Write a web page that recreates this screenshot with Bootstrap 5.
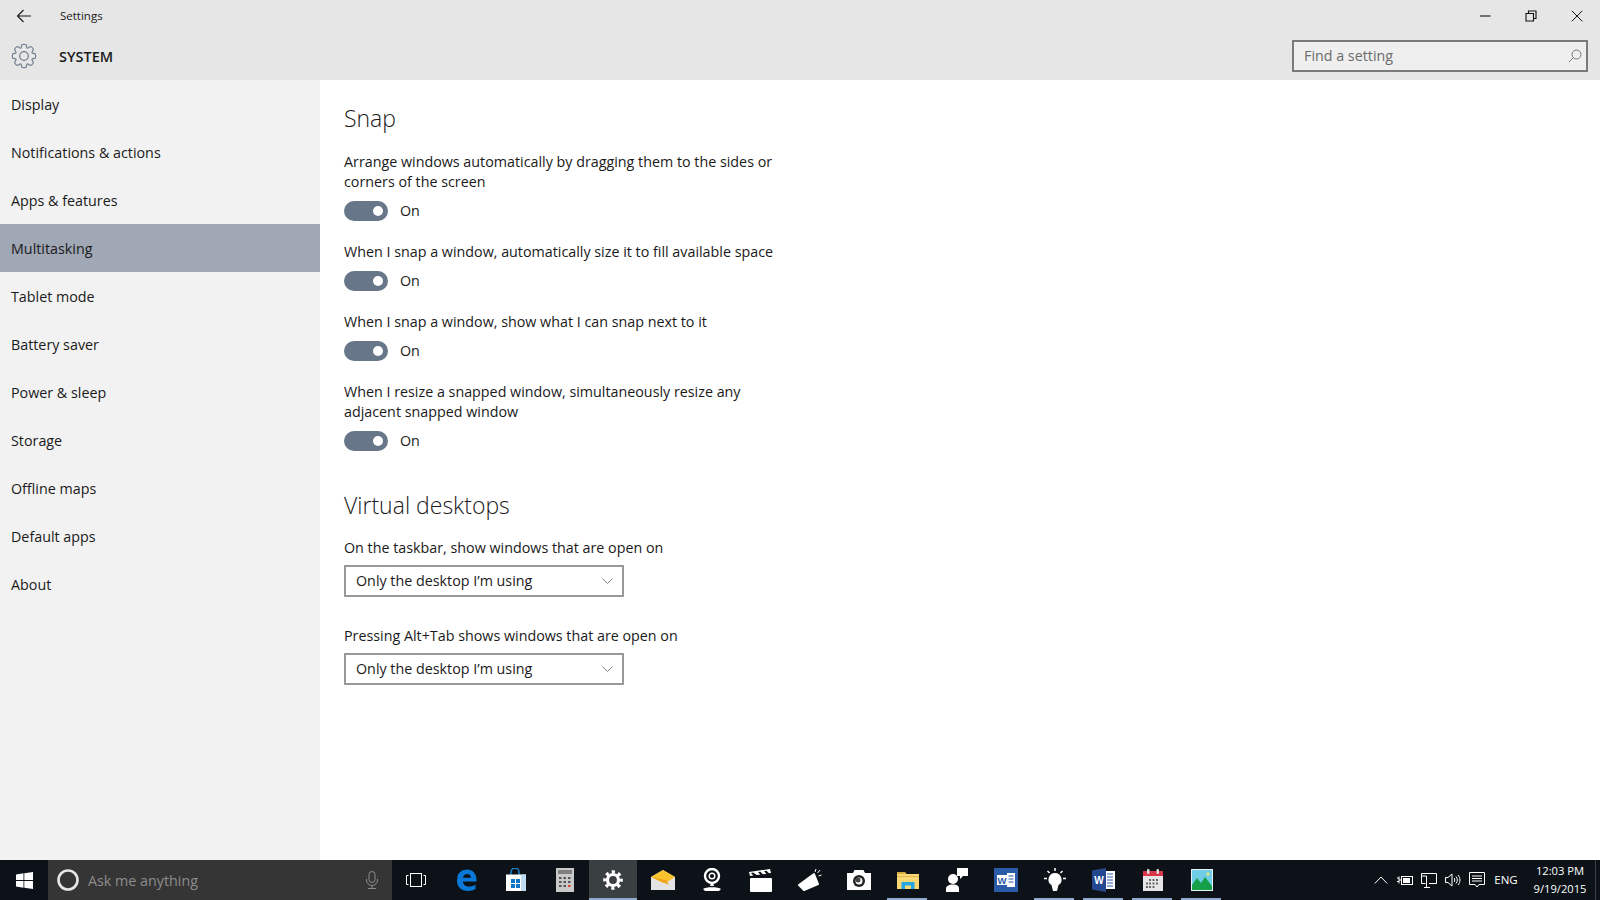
<!DOCTYPE html>
<html lang="en">
<head>
  <meta charset="UTF-8" />
  <title>Settings</title>
  <link href="https://cdn.jsdelivr.net/npm/bootstrap@5.3.0/dist/css/bootstrap.min.css" rel="stylesheet"/>
  <style>
    html, body { height: 100%; }
    body {
      font-family: "Open Sans", "Noto Sans", sans-serif;
      font-size: 14.3px;
      color: #1a1a1a;
      background: #fff;
      overflow: hidden;
    }
    .app-shell { height: 900px; }
    .win-head { height: 80px; background: #e6e6e6; flex: none; }
    .title-row { height: 32px; }
    .back-btn { width: 48px; }
    .title-text { font-size: 11.5px; margin-left: 12px; }
    .win-ctl { width: 46px; height: 32px; }
    .system-row { height: 48px; }
    .system-icon { width: 48px; }
    .system-text { font-size: 14.5px; font-weight: 600; margin-left: 11px; padding-top: 1px; }
    .search-box {
      width: 296px; height: 32px; margin-right: 12px; margin-top: -1px;
      border: 2px solid #7a7a7a; background: #efefef;
    }
    .search-input {
      border: 0; border-radius: 0; background: transparent; padding: 0 0 0 10px;
      font-size: 14.3px; color: #666; box-shadow: none;
    }
    .search-input::placeholder { color: #6b6b6b; opacity: 1; }
    .win-body { flex: 1 1 auto; min-height: 0; }
    .side-pane { --bs-list-group-border-width: 0px; width: 320px; background: #f2f2f2; flex: none; }
    .side-item {
      height: 48px; padding: 2px 0 0 11px; border-radius: 0;
      background: transparent; color: #1a1a1a; font-size: 14.3px;
      display: flex; align-items: center;
    }
    .side-item.active { background: #a0a7b5; color: #1a1a1a; }
    .main-pane { padding: 0 0 0 24px; }
    .sec-title { font-size: 23px; font-weight: 300; line-height: 32px; margin: 22px 0 18px; color: #1a1a1a; }
    .sec-title.second { margin-top: 38px; margin-bottom: 17px; }
    .opt-text { width: 440px; line-height: 20px; margin: 0; }
    .opt-row { height: 20px; margin: 9px 0 21px; }
    .tgl-on {
      width: 44px; height: 20px; border-radius: 10px; background: #68768a;
      margin-right: 12px; padding-right: 5px;
    }
    .tgl-knob { width: 10px; height: 10px; border-radius: 50%; background: #fff; }
    .drop-box {
      width: 280px; height: 32px; border: 2px solid #999; border-radius: 0;
      padding: 0 9px 0 10px; margin: 7px 0 29px; background: #fff;
    }
    .task-bar { height: 40px; background: #0c1217; color: #fff; flex: none; }
    .start-btn { width: 48px; }
    .ask-box { width: 344px; background: #353535; padding: 0 13px 0 9px; }
    .ask-text { color: #8c8c8c; font-size: 14.3px; margin-left: 9px; padding-top: 2px; }
    .view-btn { width: 50px; padding-right: 2px; }
    .app-slot { width: 49px; height: 40px; position: relative; }
    .app-slot.open::after {
      content: ""; position: absolute; left: 4px; right: 5px; bottom: 0; height: 2px; background: #8fa9cf;
    }
    .app-slot.current { background: #3a3f42; width: 48px; margin-right: 1px; }
    .app-slot.current::after {
      content: ""; position: absolute; left: 0; right: 0; bottom: 0; height: 2px; background: #8fa9cf;
    }
    .tray-slot { width: 24px; height: 40px; }
    .tray-lang { font-size: 11.5px; width: 34px; text-align: center; margin-right: 5px; }
    .tray-clock { font-size: 11.2px; line-height: 18px; width: 64px; text-align: center; margin-right: 3px; }
    .desk-edge { width: 5px; height: 40px; border-left: 1px solid #3a4046; }
  </style>
</head>
<body>
<div class="app-shell d-flex flex-column">

  <header class="win-head d-flex flex-column">
    <div class="title-row d-flex align-items-center">
      <div class="back-btn d-flex justify-content-center">
        <svg width="16" height="16" viewBox="0 0 16 16" fill="none" stroke="#1a1a1a" stroke-width="1.1"><path d="M1.5 8H15M7.5 2 1.5 8l6 6"/></svg>
      </div>
      <span class="title-text">Settings</span>
      <div class="ms-auto d-flex">
        <div class="win-ctl d-flex align-items-center justify-content-center">
          <svg width="12" height="12" viewBox="0 0 12 12" stroke="#111" stroke-width="1.1"><path d="M1 6h10.5"/></svg>
        </div>
        <div class="win-ctl d-flex align-items-center justify-content-center">
          <svg width="12" height="12" viewBox="0 0 12 12" fill="none" stroke="#111" stroke-width="1.1"><path d="M1 3.5h7.5V11H1zM3.5 3.5V1H11v7.5H8.500"/></svg>
        </div>
        <div class="win-ctl d-flex align-items-center justify-content-center">
          <svg width="12" height="12" viewBox="0 0 12 12" stroke="#111" stroke-width="1"><path d="M.8.8l10.500 10.500M11.300.8.8 11.300"/></svg>
        </div>
      </div>
    </div>
    <div class="system-row d-flex align-items-center">
      <div class="system-icon d-flex justify-content-center">
        <svg width="26" height="26" viewBox="-13 -13 26 26" fill="none" stroke="#6f7f90" stroke-width="1.200">
          <defs><path id="gearTooth" d="M-3.250-7.850C-2.200-8.600-2.900-10-2.200-11.200-1-11.800 1-11.800 2.200-11.200 2.900-10 2.200-8.600 3.250-7.850"/></defs>
          <use href="#gearTooth"/><use href="#gearTooth" transform="rotate(45)"/><use href="#gearTooth" transform="rotate(90)"/><use href="#gearTooth" transform="rotate(135)"/>
          <use href="#gearTooth" transform="rotate(180)"/><use href="#gearTooth" transform="rotate(225)"/><use href="#gearTooth" transform="rotate(270)"/><use href="#gearTooth" transform="rotate(315)"/>
          <circle r="4.300"/>
        </svg>
      </div>
      <span class="system-text">SYSTEM</span>
      <div class="search-box ms-auto d-flex align-items-center">
        <input class="form-control search-input" type="text" placeholder="Find a setting">
        <svg class="flex-shrink-0 me-1" width="14" height="14" viewBox="0 0 14 14" fill="none" stroke="#777" stroke-width="1"><circle cx="8.500" cy="5.500" r="4.500"/><path d="M5.200 8.800.8 13.200"/></svg>
      </div>
    </div>
  </header>

  <div class="win-body d-flex">
    <nav class="side-pane list-group list-group-flush">
      <a class="list-group-item side-item" href="#">Display</a>
      <a class="list-group-item side-item" href="#">Notifications &amp; actions</a>
      <a class="list-group-item side-item" href="#">Apps &amp; features</a>
      <a class="list-group-item side-item active" href="#">Multitasking</a>
      <a class="list-group-item side-item" href="#">Tablet mode</a>
      <a class="list-group-item side-item" href="#">Battery saver</a>
      <a class="list-group-item side-item" href="#">Power &amp; sleep</a>
      <a class="list-group-item side-item" href="#">Storage</a>
      <a class="list-group-item side-item" href="#">Offline maps</a>
      <a class="list-group-item side-item" href="#">Default apps</a>
      <a class="list-group-item side-item" href="#">About</a>
    </nav>

    <main class="main-pane flex-grow-1">
      <h2 class="sec-title">Snap</h2>

      <p class="opt-text">Arrange windows automatically by dragging them to the sides or corners of the screen</p>
      <div class="opt-row d-flex align-items-center"><span class="tgl-on d-flex align-items-center justify-content-end"><span class="tgl-knob"></span></span>On</div>

      <p class="opt-text">When I snap a window, automatically size it to fill available space</p>
      <div class="opt-row d-flex align-items-center"><span class="tgl-on d-flex align-items-center justify-content-end"><span class="tgl-knob"></span></span>On</div>

      <p class="opt-text">When I snap a window, show what I can snap next to it</p>
      <div class="opt-row d-flex align-items-center"><span class="tgl-on d-flex align-items-center justify-content-end"><span class="tgl-knob"></span></span>On</div>

      <p class="opt-text">When I resize a snapped window, simultaneously resize any adjacent snapped window</p>
      <div class="opt-row d-flex align-items-center"><span class="tgl-on d-flex align-items-center justify-content-end"><span class="tgl-knob"></span></span>On</div>

      <h2 class="sec-title second">Virtual desktops</h2>

      <p class="opt-text">On the taskbar, show windows that are open on</p>
      <div class="drop-box d-flex align-items-center justify-content-between">
        <span>Only the desktop I’m using</span>
        <svg width="11" height="6" viewBox="0 0 11 6" fill="none" stroke="#808080" stroke-width="1"><path d="M.5.5l5 5 5-5"/></svg>
      </div>

      <p class="opt-text">Pressing Alt+Tab shows windows that are open on</p>
      <div class="drop-box d-flex align-items-center justify-content-between">
        <span>Only the desktop I’m using</span>
        <svg width="11" height="6" viewBox="0 0 11 6" fill="none" stroke="#808080" stroke-width="1"><path d="M.5.5l5 5 5-5"/></svg>
      </div>
    </main>
  </div>

  <footer class="task-bar d-flex align-items-center">
    <div class="start-btn d-flex justify-content-center">
      <svg width="17" height="17" viewBox="0 0 17 17" fill="#fff"><path d="M0 2.400 7.500 1.300v6.800H0zM8.300 1.200 17 0v8.100H8.300zM0 8.900h7.500v6.800L0 14.600zM8.300 8.900H17V17l-8.700-1.200z"/></svg>
    </div>
    <div class="ask-box d-flex align-items-center align-self-stretch">
      <svg width="22" height="22" viewBox="0 0 22 22" fill="none" stroke="#e6e6e6" stroke-width="2.600"><circle cx="11" cy="11" r="9.500"/></svg>
      <span class="ask-text">Ask me anything</span>
      <svg class="ms-auto" width="14" height="18" viewBox="0 0 14 18" fill="none" stroke="#8c8c8c" stroke-width="1"><rect x="4" y=".5" width="6" height="11" rx="3"/><path d="M1.500 8v1a5.500 5.500 0 0 0 11 0V8M7 14.500v3M3 17.500h8"/></svg>
    </div>
    <div class="view-btn d-flex justify-content-center">
      <svg width="20" height="14" viewBox="0 0 20 14" fill="none" stroke="#fff" stroke-width="1"><rect x="4.500" y=".5" width="11" height="13"/><path d="M2.500 2.500H.5v9h2M17.500 2.500h2v9h-2"/></svg>
    </div>

    <!-- edge -->
    <div class="app-slot d-flex align-items-center justify-content-center">
      <svg width="21" height="22" viewBox="0 0 21 22" fill="#0a78d7"><path d="M1 9C2 3.500 6 .5 11 .5c5.500 0 9.500 4 9.500 10.500v1.600H7c.2 3.200 2.600 5 6 5 2.500 0 4.800-.8 6.500-1.900v4.400c-2 1.200-4.500 1.900-7.500 1.900-6.500 0-11-4-11-10 0-2.600.9-5 3-6.900C3.500 6 2 7.500 1 9zm6-.2h8c0-2.400-1.500-3.900-3.800-3.900C9.100 4.900 7.300 6.400 7 8.800z"/></svg>
    </div>
    <!-- store -->
    <div class="app-slot d-flex align-items-center justify-content-center">
      <svg width="22" height="24" viewBox="0 0 22 24">
        <path d="M6 7V4a4 4 0 0 1 8 0v3" fill="none" stroke="#1e8fe0" stroke-width="1.300"/>
        <path d="M1 6.500h20V23H1z" fill="#fff"/>
        <path d="M16 6.500h5V23h-5z" fill="#bfdcf3"/>
        <path d="M6 11h4v4H6zM11 11h4v4h-4zM6 16h4v4H6zM11 16h4v4h-4z" fill="#1273c4"/>
      </svg>
    </div>
    <!-- calculator -->
    <div class="app-slot d-flex align-items-center justify-content-center">
      <svg width="18" height="24" viewBox="0 0 18 24">
        <rect width="18" height="24" fill="#c9c9c9"/><rect x="2" y="2" width="14" height="4" fill="#808080"/>
        <path d="M3 9h2.500v2H3zM7.500 9H10v2H7.500zM12 9h2.500v2H12zM3 13h2.500v2H3zM7.500 13H10v2H7.500zM12 13h2.500v2H12zM3 17h2.500v2H3zM7.500 17H10v2H7.500z" fill="#555"/>
        <path d="M12 17h2.500v2H12z" fill="#e0452a"/>
      </svg>
    </div>
    <!-- settings, the running window -->
    <div class="app-slot current d-flex align-items-center justify-content-center">
      <svg width="20" height="20" viewBox="0 0 20 20" fill="none" stroke="#fff">
        <circle cx="10" cy="10" r="5.500" stroke-width="3.200"/>
        <circle cx="10" cy="10" r="8" stroke-width="3.600" stroke-dasharray="3.100 3.183" stroke-dashoffset="1.500"/>
      </svg>
    </div>
    <!-- mail -->
    <div class="app-slot d-flex align-items-center justify-content-center">
      <svg width="24" height="20" viewBox="0 0 24 20">
        <path d="M0 7 12 0l12 7v13H0z" fill="#e4e4e4"/>
        <path d="M0 7 12 0l12 7-6 4-2 1-4 1z" fill="#f8c32f"/>
        <path d="M0 7l18 8-3-5z" fill="#f0a51e"/>
      </svg>
    </div>
    <!-- webcam -->
    <div class="app-slot d-flex align-items-center justify-content-center">
      <svg width="20" height="24" viewBox="0 0 20 24" fill="none" stroke="#fff">
        <circle cx="10" cy="8" r="7" stroke-width="2.400"/><circle cx="10" cy="8" r="2.800" stroke-width="1.400"/>
        <path d="M9 15h2l1 3H8z" fill="#fff" stroke="none"/>
        <path d="M1 21c2-2.400 16-2.400 18 0l-2 2H3z" fill="#fff" stroke="none"/>
      </svg>
    </div>
    <!-- clapper -->
    <div class="app-slot d-flex align-items-center justify-content-center">
      <svg width="23" height="23" viewBox="0 0 23 23" fill="#fff">
        <rect x="1" y="9" width="22" height="14" rx="1"/>
        <path d="M0 3 21 0l1 4-2 .3-2.500-2.500-2.500.4 2.500 2.500-3.600.5-2.500-2.500-2.500.4 2.500 2.500-3.600.5L4 3.600l-2 .3 2.400 2.500-3.400.5z"/>
      </svg>
    </div>
    <!-- get started -->
    <div class="app-slot d-flex align-items-center justify-content-center">
      <svg width="24" height="24" viewBox="0 0 24 24">
        <path d="M1 17 16 6l4 10L6 22z" fill="#fff" stroke="#fff" stroke-width="2" stroke-linejoin="round"/>
        <path d="M18 1l-1 3M22 2l-2.500 3M23.500 7l-3 1" fill="none" stroke="#fff" stroke-width="1"/>
      </svg>
    </div>
    <!-- camera -->
    <div class="app-slot d-flex align-items-center justify-content-center">
      <svg width="24" height="20" viewBox="0 0 24 20">
        <path d="M0 3h6l1.500-3h9L18 3h6v17H0z" fill="#fff"/>
        <circle cx="12" cy="11" r="6" fill="#222"/><circle cx="12" cy="11" r="3.500" fill="#fff"/>
        <circle cx="11" cy="10" r="2.500" fill="#444"/>
      </svg>
    </div>
    <!-- explorer -->
    <div class="app-slot open d-flex align-items-center justify-content-center">
      <svg width="22" height="18" viewBox="0 0 22 18">
        <path d="M0 1h8l1.500 2H22v15H0z" fill="#f8d775"/>
        <path d="M0 1h8v2H0z" fill="#d9a93b"/>
        <path d="M0 5h22v1H0z" fill="#e2b64f"/>
        <path d="M4.500 18v-7h13v7h-3.500v-3.500H8V18z" fill="#25a5e4"/>
      </svg>
    </div>
    <!-- people -->
    <div class="app-slot d-flex align-items-center justify-content-center">
      <svg width="22" height="24" viewBox="0 0 22 24" fill="#fff">
        <circle cx="7" cy="11" r="5"/><path d="M0 24v-3c0-3 2.500-4.500 7-4.500s6 1.500 6 4.500v3z"/>
        <path d="M11 0h11v8h-5l-3 3V8h-3z"/>
      </svg>
    </div>
    <!-- word tile -->
    <div class="app-slot d-flex align-items-center justify-content-center">
      <svg width="24" height="24" viewBox="0 0 24 24">
        <rect width="24" height="24" fill="#2b5ba6"/>
        <rect x="13" y="5" width="8" height="14" fill="#fff"/>
        <path d="M14.500 8h5M14.500 11h5M14.500 14h5" stroke="#2b5ba6" stroke-width="1"/>
        <rect x="3" y="7" width="10" height="10" fill="#fff"/>
        <text x="8" y="15.500" text-anchor="middle" font-family="Liberation Sans" font-weight="700" font-size="9.500" fill="#2b5ba6">W</text>
      </svg>
    </div>
    <!-- tips -->
    <div class="app-slot open d-flex align-items-center justify-content-center">
      <svg width="22" height="24" viewBox="0 0 22 24" fill="#fff">
        <path d="M11 5a6.500 6.500 0 0 0-3.500 12L9 23h4l1.500-6A6.500 6.500 0 0 0 11 5z"/>
        <path d="M11 0v3M3.500 3l2 2M18.500 3l-2 2M0 10.500h3M19 10.500h3" fill="none" stroke="#fff" stroke-width="1.500"/>
      </svg>
    </div>
    <!-- word desktop -->
    <div class="app-slot open d-flex align-items-center justify-content-center">
      <svg width="23" height="24" viewBox="0 0 23 24">
        <path d="M13 3h10v18H13z" fill="#fff"/>
        <path d="M15 6h6M15 9h6M15 12h6M15 15h6M15 18h6" stroke="#2b5ba6" stroke-width="1"/>
        <path d="M0 2.500 14 0v24L0 21.500z" fill="#24488f"/>
        <text x="7" y="16" text-anchor="middle" font-family="Liberation Sans" font-weight="700" font-size="10" fill="#fff">W</text>
      </svg>
    </div>
    <!-- calendar -->
    <div class="app-slot open d-flex align-items-center justify-content-center">
      <svg width="20" height="22" viewBox="0 0 20 22">
        <rect y="2" width="20" height="20" fill="#e6e6e6"/><rect y="2" width="20" height="5" fill="#d8374b"/>
        <rect x="4" width="2.500" height="5" rx="1" fill="#ddd"/><rect x="13.500" width="2.500" height="5" rx="1" fill="#ddd"/>
        <path d="M6 10h2v2H6zM9.500 10h2v2h-2zM13 10h2v2h-2zM3 13.500h2v2H3zM6 13.500h2v2H6zM9.500 13.500h2v2h-2zM13 13.500h2v2h-2zM3 17h2v2H3zM6 17h2v2H6zM9.500 17h2v2h-2z" fill="#666"/>
      </svg>
    </div>
    <!-- photos -->
    <div class="app-slot open d-flex align-items-center justify-content-center">
      <svg width="22" height="22" viewBox="0 0 22 22">
        <rect width="22" height="22" fill="#e8f2f2"/><rect x="1" y="1" width="20" height="20" fill="#6fcde6"/>
        <path d="M1 21v-5l5-7 4 5 4-6 7 9v4z" fill="#17a04a"/>
        <circle cx="17" cy="5" r="1.500" fill="#f5e96a"/>
      </svg>
    </div>

    <div class="ms-auto d-flex align-items-center">
      <div class="tray-slot d-flex align-items-center justify-content-center">
        <svg width="14" height="8" viewBox="0 0 14 8" fill="none" stroke="#fff" stroke-width="1"><path d="M.8 7.500 7 1l6.200 6.500"/></svg>
      </div>
      <div class="tray-slot d-flex align-items-center justify-content-center">
        <svg width="16" height="11" viewBox="0 0 16 11" fill="none" stroke="#fff" stroke-width="1"><path d="M0 3h2M0 6.500h2M2 1.500v7M2 5h2"/><rect x="4.500" y="1.500" width="11" height="8"/><rect x="6" y="3" width="7" height="5" fill="#fff" stroke="none"/></svg>
      </div>
      <div class="tray-slot d-flex align-items-center justify-content-center">
        <svg width="16" height="15" viewBox="0 0 16 15" fill="none" stroke="#fff" stroke-width="1"><path d="M4.500 10.500H.5V.5h15v10H8M.5 3h5v11M3 14.500h6"/></svg>
      </div>
      <div class="tray-slot d-flex align-items-center justify-content-center">
        <svg width="16" height="14" viewBox="0 0 16 14" fill="none" stroke="#fff" stroke-width="1"><path d="M.5 4.500h2.500L7 1v12L3 9.500H.5zM9 5c1 1 1 3 0 4M11 3.500c1.800 2 1.800 5 0 7M13 2c2.600 3 2.600 7 0 10"/></svg>
      </div>
      <div class="tray-slot d-flex align-items-center justify-content-center">
        <svg width="16" height="16" viewBox="0 0 16 16" fill="none" stroke="#fff" stroke-width="1"><path d="M.5.5h15v12H10l-2 2.500-2-2.500H.5zM3 4h10M3 6.500h10M3 9h10"/></svg>
      </div>
      <span class="tray-lang">ENG</span>
      <div class="tray-clock"><div>12:03 PM</div><div>9/19/2015</div></div>
      <div class="desk-edge"></div>
    </div>
  </footer>
</div>
<script src="https://cdn.jsdelivr.net/npm/bootstrap@5.3.0/dist/js/bootstrap.bundle.min.js"></script>
</body>
</html>
